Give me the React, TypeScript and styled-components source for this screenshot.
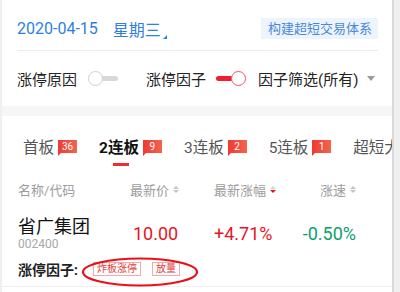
import React from "react";
import styled, { createGlobalStyle } from "styled-components";

const GlobalStyle = createGlobalStyle`
  html, body {
    margin: 0;
    padding: 0;
    background: #efefef;
    font-family: Roboto, "Noto Sans CJK SC", sans-serif;
  }
  * {
    box-sizing: border-box;
  }
`;

const Frame = styled.div`
  height: 292px;
  width: 400px;
  padding-left: 2px;
  overflow: hidden;
`;

const Panel = styled.div`
  width: 392px;
  height: 292px;
  background: #fff;
  border-right: 2px solid #d9d9d9;
  overflow: hidden;
`;

const HeaderBar = styled.div`
  height: 51px;
  margin: 0 14px 0 15px;
  border-bottom: 1px solid #ececec;
  display: flex;
  align-items: center;
  justify-content: space-between;
`;

const DateBox = styled.div`
  display: flex;
  align-items: center;
  color: #2f7ee0;
  font-size: 16px;
  padding-top: 7px;
`;

const Week = styled.span`
  margin-left: 15px;
  position: relative;
  padding-right: 6px;

  &::after {
    content: "";
    position: absolute;
    right: 0;
    bottom: 2px;
    border-left: 4px solid transparent;
    border-bottom: 4px solid #2f7ee0;
  }
`;

const BuildButton = styled.div`
  background: #edf4fe;
  color: #4b87d8;
  font-size: 13px;
  line-height: 21px;
  padding: 0 6px 0 7px;
  margin-top: 6px;
`;

const OptionRow = styled.div`
  height: 55px;
  display: flex;
  align-items: center;
  padding: 0 0 0 15px;
  font-size: 15px;
  color: #222;
`;

const Toggle = styled.div<{ on?: boolean }>`
  position: relative;
  width: 30px;
  height: 15px;
  display: flex;
  align-items: center;
  flex-direction: ${(p) => (p.on ? "row" : "row-reverse")};
  margin-right: ${(p) => (p.on ? "12px" : "28px")};
  margin-left: ${(p) => (p.on ? "10px" : "11px")};
`;

const Track = styled.div<{ on?: boolean }>`
  flex: 1;
  height: 5px;
  border-radius: 3px;
  margin: ${(p) => (p.on ? "0 -2px 0 0" : "0 0 0 -2px")};
  background: ${(p) => (p.on ? "#ee1f33" : "#d9d9d9")};
`;

const Knob = styled.div<{ on?: boolean }>`
  width: 15px;
  height: 15px;
  border-radius: 50%;
  background: #fff;
  border: 1px solid ${(p) => (p.on ? "#ee5566" : "#cfcfcf")};
  position: relative;
  z-index: 1;
`;

const Caret = styled.span`
  margin-left: 9px;
  border-left: 4px solid transparent;
  border-right: 4px solid transparent;
  border-top: 5px solid #9a9a9a;
`;

const Band = styled.div`
  height: 10px;
  background: #f6f6f6;
`;

const TabRow = styled.div`
  height: 54px;
  display: flex;
  align-items: flex-start;
  gap: 22px;
  padding: 22px 0 0 21px;
  white-space: nowrap;
`;

const Tab = styled.div`
  display: flex;
  align-items: flex-start;
  gap: 4px;
  flex-shrink: 0;
`;

const TabLabel = styled.span<{ active?: boolean }>`
  position: relative;
  font-size: 15.5px;
  line-height: 20px;
  color: ${(p) => (p.active ? "#111" : "#555")};
  font-weight: ${(p) => (p.active ? 700 : 400)};

  &::after {
    content: "";
    display: ${(p) => (p.active ? "block" : "none")};
    position: absolute;
    left: 50%;
    margin-left: -6px;
    top: 25px;
    width: 16px;
    height: 3px;
    background: #ee2a33;
  }
`;

const Badge = styled.span`
  position: relative;
  margin-top: 2px;
  width: 19px;
  height: 13px;
  background: linear-gradient(90deg, #ee3a34, #f4644c);
  color: #fff;
  font-size: 10px;
  line-height: 13px;
  text-align: center;

  &::after {
    content: "";
    position: absolute;
    left: 0;
    bottom: -3px;
    border-top: 3px solid #ee3a34;
    border-right: 3px solid transparent;
  }
`;

const Grid = styled.div`
  display: grid;
  grid-template-columns: 112px 84px 86px 56px;
  padding-left: 16px;
  align-items: center;
`;

const HeadRow = styled(Grid)`
  height: 38px;
  font-size: 13px;
  color: #9c9c9c;
`;

const HeadCell = styled.div<{ right?: boolean }>`
  display: flex;
  align-items: center;
  justify-content: ${(p) => (p.right ? "flex-end" : "flex-start")};
`;

const SortIcon = styled.span<{ active?: boolean }>`
  display: inline-flex;
  flex-direction: column;
  gap: 1px;
  margin-left: 4px;

  &::before,
  &::after {
    content: "";
    border-left: 3px solid transparent;
    border-right: 3px solid transparent;
  }
  &::before {
    border-bottom: 3px solid ${(p) => (p.active ? "#d6d6d6" : "#c4c4c4")};
  }
  &::after {
    border-top: 3px solid ${(p) => (p.active ? "#e8131f" : "#c4c4c4")};
  }
`;

const DataRow = styled(Grid)`
  height: 44px;
  padding-top: 7px;
`;

const NameCell = styled.div`
  display: flex;
  flex-direction: column;
`;

const StockName = styled.span`
  font-size: 18px;
  line-height: 22px;
  color: #111;
`;

const Code = styled.span`
  font-size: 12px;
  line-height: 13px;
  color: #a8a8a8;
`;

const Value = styled.div<{ tone: "up" | "down"; right?: boolean; shift?: number }>`
  font-size: 18px;
  color: ${(p) => (p.tone === "up" ? "#e8131f" : "#0aa06e")};
  text-align: ${(p) => (p.right ? "right" : "left")};
  padding-left: ${(p) => p.shift || 0}px;
`;

const FactorRow = styled.div`
  position: relative;
  height: 35px;
  display: flex;
  align-items: center;
  padding-left: 16px;
  border-bottom: 1px solid #efefef;
`;

const FactorLabel = styled.span`
  font-size: 14px;
  font-weight: 700;
  color: #222;
  margin-right: 15px;
`;

const Tag = styled.span`
  font-size: 10px;
  line-height: 12px;
  padding: 0 3px;
  border: 1px solid #f1a9a9;
  color: #e23a3a;
  margin-right: 11px;
`;

const Circle = styled.svg`
  position: absolute;
  left: 79px;
  top: 5px;
`;

function Switch({ on }: { on?: boolean }) {
  return (
    <Toggle on={on}>
      <Track on={on} />
      <Knob on={on} />
    </Toggle>
  );
}

const tabs = [
  { name: "首板", count: 36 },
  { name: "2连板", count: 9, active: true },
  { name: "3连板", count: 2 },
  { name: "5连板", count: 1 },
  { name: "超短大涨" },
];

export default function App() {
  return (
    <>
      <GlobalStyle />
      <Frame>
        <Panel>
          <HeaderBar>
            <DateBox>
              <span>2020-04-15</span>
              <Week>星期三</Week>
            </DateBox>
            <BuildButton>构建超短交易体系</BuildButton>
          </HeaderBar>

          <OptionRow>
            <span>涨停原因</span>
            <Switch />
            <span>涨停因子</span>
            <Switch on />
            <span>因子筛选(所有)</span>
            <Caret />
          </OptionRow>

          <Band />

          <TabRow>
            {tabs.map((t) => (
              <Tab key={t.name}>
                <TabLabel active={t.active}>{t.name}</TabLabel>
                {t.count !== undefined && <Badge>{t.count}</Badge>}
              </Tab>
            ))}
          </TabRow>

          <HeadRow>
            <HeadCell>名称/代码</HeadCell>
            <HeadCell>
              最新价
              <SortIcon />
            </HeadCell>
            <HeadCell>
              最新涨幅
              <SortIcon active />
            </HeadCell>
            <HeadCell right>
              涨速
              <SortIcon />
            </HeadCell>
          </HeadRow>

          <DataRow>
            <NameCell>
              <StockName>省广集团</StockName>
              <Code>002400</Code>
            </NameCell>
            <Value tone="up" shift={3}>10.00</Value>
            <Value tone="up">+4.71%</Value>
            <Value tone="down" right>-0.50%</Value>
          </DataRow>

          <FactorRow>
            <FactorLabel>涨停因子:</FactorLabel>
            <Tag>炸板涨停</Tag>
            <Tag>放量</Tag>
            {/* hand drawn mark around the tags */}
            <Circle width="118" height="30" viewBox="0 0 118 30">
              <ellipse cx="59" cy="15" rx="57" ry="13.5" fill="none" stroke="#e8101a" strokeWidth="2.2" />
            </Circle>
          </FactorRow>
        </Panel>
      </Frame>
    </>
  );
}
